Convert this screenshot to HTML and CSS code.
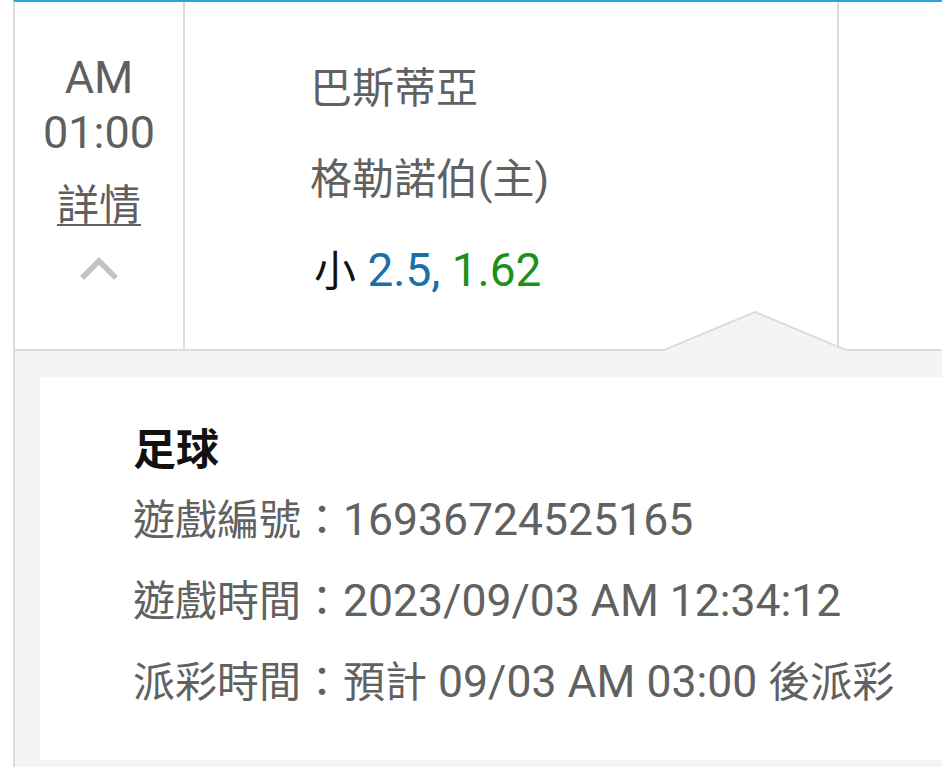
FILE: index.html
```html
<!DOCTYPE html>
<html lang="zh-Hant">
<head>
<meta charset="utf-8">
<title>注單詳情</title>
<link rel="stylesheet" href="styles.css">
</head>
<body>
<div class="wrap">
  <div class="row">
    <div class="col-time">
      <div class="time">AM</div>
      <div class="time">01:00</div>
      <div class="detail-link">詳情</div>
      <svg class="chev" width="40" height="26" viewBox="0 0 40 26"><polyline points="3,23 20,6 37,23" fill="none" stroke="#c3c3c3" stroke-width="5.5"/></svg>
    </div>
    <div class="col-teams">
      <div class="team">巴斯蒂亞</div>
      <div class="team">格勒諾伯(主)</div>
      <div class="team bet"><span class="bet-label">小</span><span class="num"> <span class="line">2.5,</span> <span class="odds">1.62</span></span></div>
    </div>
    <div class="col-rest"></div>
    <svg class="notch" width="182" height="40" viewBox="0 0 182 40">
      <polygon points="0,42 0,39 91,1 182,39 182,42" fill="#f4f4f4"/>
      <polyline points="0,39 91,1 182,39" fill="none" stroke="#dcdcdc" stroke-width="2"/>
    </svg>
  </div>
  <div class="panel">
    <div class="card">
      <div class="sport">足球</div>
      <div class="info">遊戲編號：<span class="num">16936724525165</span></div>
      <div class="info">遊戲時間：<span class="num">2023/09/03 AM 12:34:12</span></div>
      <div class="info">派彩時間：預計<span class="num"> 09/03 AM 03:00 </span>後派彩</div>
    </div>
  </div>
</div>
</body>
</html>
```

FILE: styles.css
```css
html, body {
  margin: 0;
  padding: 0;
  background: #ffffff;
  overflow: hidden;
}
body {
  width: 942px;
  height: 767px;
  font-family: Roboto, "Noto Sans CJK TC", sans-serif;
  color: #616161;
}
.wrap {
  margin-left: 13px;
  border-left: 2px solid #dcdcdc;
  border-top: 2px solid #2aa3e3;
  height: 765px;
  display: flex;
  flex-direction: column;
}
.row {
  position: relative;
  display: grid;
  grid-template-columns: 170px 654px 1fr;
  height: 347px;
  border-bottom: 2px solid #dcdcdc;
  flex: none;
}
.col-time {
  border-right: 2px solid #dcdcdc;
  display: flex;
  flex-direction: column;
  align-items: center;
  padding-top: 48px;
  box-sizing: border-box;
}
.time {
  font-size: 45px;
  line-height: 55px;
  color: #5f5f5f;
}
.detail-link {
  margin-top: 18px;
  font-size: 42px;
  line-height: 56px;
  color: #5f5f5f;
  text-decoration: underline;
  text-decoration-thickness: 2px;
  text-underline-offset: 4px;
}
.chev {
  margin-top: 21px;
  display: block;
}
.col-teams {
  border-right: 2px solid #dcdcdc;
  padding-top: 41px;
  padding-left: 125px;
  box-sizing: border-box;
}
.team {
  font-size: 42px;
  line-height: 91px;
  height: 91px;
  color: #616161;
  white-space: nowrap;
}
.bet-label {
  color: #111111;
  margin-left: 4px;
}
.bet .num { font-size: 46px; }
.line { color: #1a6fa9; }
.odds { color: #1b901b; }
.notch {
  position: absolute;
  left: 649px;
  top: 309px;
  display: block;
}
.panel {
  flex: 1;
  background: #f4f4f4;
  padding: 26px 0 0 25px;
}
.card {
  background: #ffffff;
  padding: 43px 0 37px 93px;
}
.sport {
  font-size: 43px;
  line-height: 60px;
  font-weight: 700;
  color: #111111;
}
.info {
  font-size: 42px;
  line-height: 81px;
  color: #616161;
  white-space: nowrap;
}
.info .num { font-size: 44.5px; }
```
